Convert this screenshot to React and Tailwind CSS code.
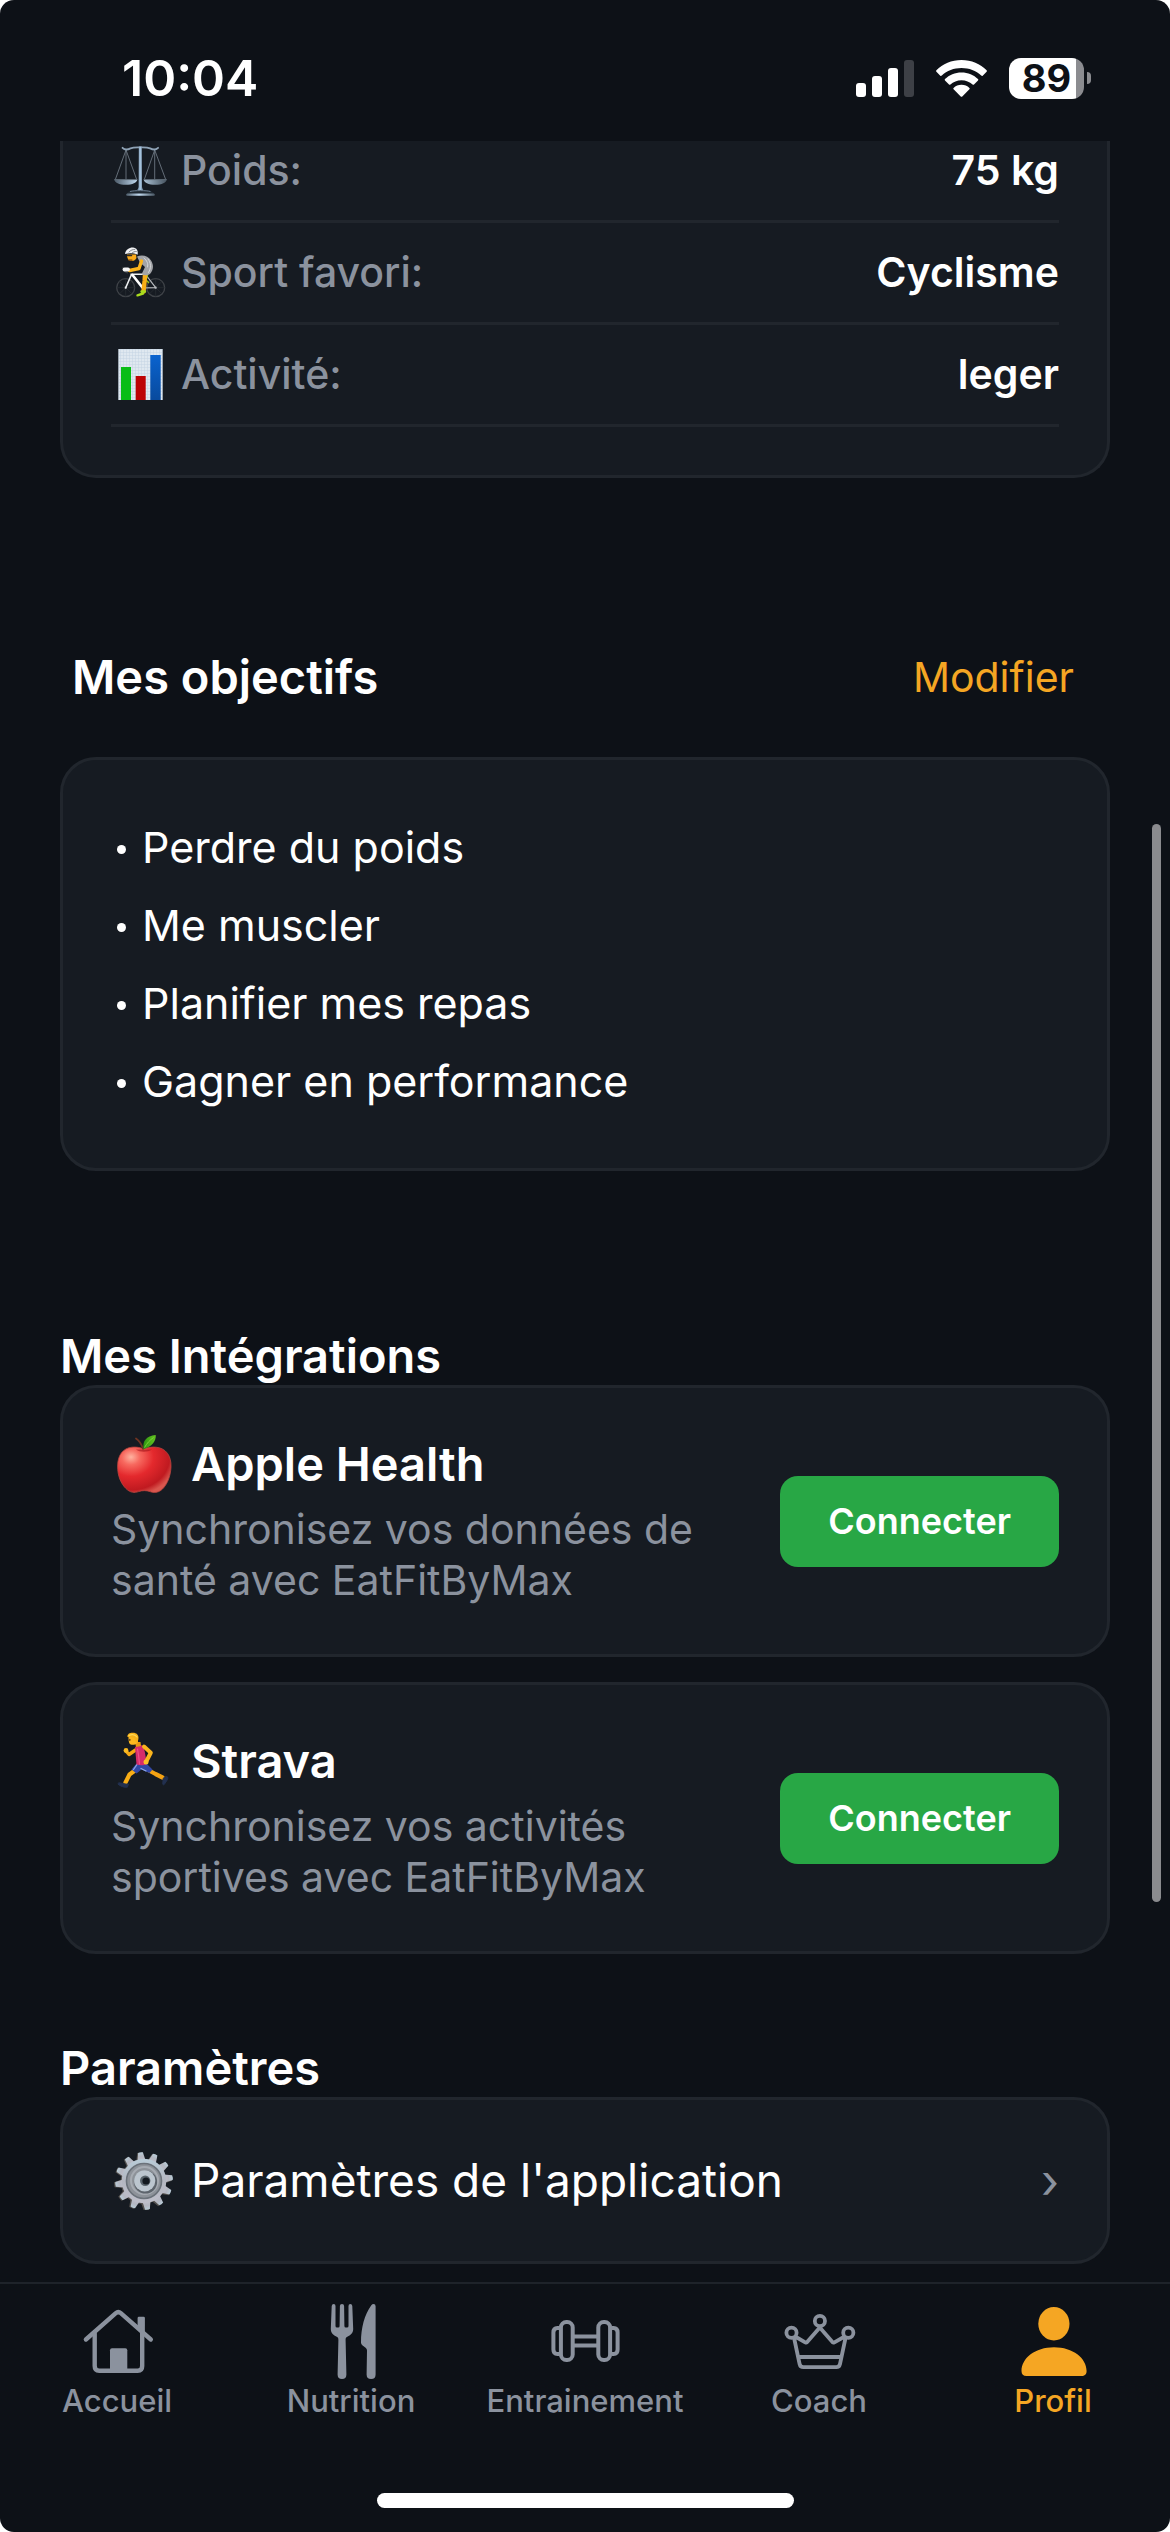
import React from "react";

/* ---------- Status bar glyphs ---------- */

function SignalIcon() {
  return (
    <svg width="58" height="37" viewBox="0 0 58 37" aria-hidden="true">
      <rect x="0" y="23" width="10" height="14" rx="3" fill="#fff" />
      <rect x="16" y="16" width="10" height="21" rx="3" fill="#fff" />
      <rect x="32" y="8" width="10" height="29" rx="3" fill="#fff" />
      <rect x="48" y="0" width="10" height="37" rx="3" fill="#3d4046" />
    </svg>
  );
}

function WifiIcon() {
  return (
    <svg width="51" height="37" viewBox="0 0 51 37" fill="#fff" aria-hidden="true">
      <path d="M25.500 0C35.400 0 44.400 3.900 50.600 10.200Q51.300 11 50.600 11.700L46.700 15.700Q46 16.300 45.200 15.600C40 10.700 33.100 8 25.500 8S11 10.700 5.800 15.600Q5 16.300 4.300 15.700L.4 11.700Q-.3 11 .4 10.200C6.600 3.900 15.600 0 25.500 0Z" />
      <path d="M25.500 12.500C32 12.500 37.800 15 42 19.100Q42.700 19.800 42 20.500L38 24.500Q37.300 25.100 36.600 24.500C33.700 21.900 29.800 20.300 25.500 20.300S17.300 21.900 14.400 24.500Q13.700 25.100 13 24.500L9 20.500Q8.300 19.800 9 19.100C13.200 15 19 12.500 25.500 12.500Z" />
      <path d="M25.500 24.800C28.600 24.800 31.400 26 33.400 28Q34 28.600 33.400 29.300L26.300 36.500Q25.500 37.200 24.700 36.500L17.600 29.300Q17 28.600 17.600 28C19.600 26 22.400 24.800 25.500 24.800Z" />
    </svg>
  );
}

function Battery() {
  return (
    <div className="flex items-center gap-[3px]">
      <div className="flex h-[41px] w-[75px] items-center justify-center rounded-xl bg-[linear-gradient(to_right,#fff_67px,#8b8c90_67px)] text-[38px] leading-[41px] font-bold text-[#0d1117]">
        89
      </div>
      <div className="h-3 w-1 rounded-r-full bg-[#8b8c90]" />
    </div>
  );
}

/* ---------- Pictograms ---------- */

function ScalesIcon() {
  return (
    <svg width="58" height="51" viewBox="0 0 58 51" fill="none" aria-hidden="true">
      <defs>
        <linearGradient id="pan" x1="0" x2="1">
          <stop offset="0" stopColor="#4b5a68" />
          <stop offset=".45" stopColor="#c3dcf2" />
          <stop offset="1" stopColor="#46535f" />
        </linearGradient>
        <linearGradient id="pole" x1="0" x2="1">
          <stop offset="0" stopColor="#3c5166" />
          <stop offset=".5" stopColor="#a9c7e2" />
          <stop offset="1" stopColor="#2f3e4c" />
        </linearGradient>
      </defs>
      <path d="M15 5 4.500 34M15 5v29M15 5l10.500 29M43.700 5 33.500 34M43.700 5v29M43.700 5 54.500 34" stroke="#6c7681" strokeWidth=".9" />
      <path d="M11.500 2.800c2 2 5.500 1.800 8 .6 3-1.300 6-1 9.800-1s6.800-.3 9.800 1c2.500 1.200 6 1.400 8-.6" stroke="#8ea2b5" strokeWidth="1.800" strokeLinecap="round" />
      <path d="M3.300 34.500h23c0 3-5 5.300-11.500 5.300S3.300 37.500 3.300 34.500ZM32.700 34.500h23c0 3-5 5.300-11.500 5.300s-11.500-2.300-11.500-5.300Z" fill="url(#pan)" />
      <path d="M3.300 34.600h23M32.700 34.600h23" stroke="#5e6a76" strokeWidth="1" />
      <path d="M27.800 1.500h3L31 42c.2 2 1.500 3.300 3.300 4.300h-10c1.800-1 3.100-2.300 3.300-4.300Z" fill="url(#pole)" />
      <path d="M18 46.300c3-1.600 19-1.600 22.600 0l3.400 3.200c0 1-1 1.200-2 1.200H17c-1 0-2-.2-2-1.200Z" fill="#1f2932" />
      <path d="M16 48.500h27l1 1.200c0 .8-1 1-2 1H17c-1 0-2-.2-2-1Z" fill="url(#pan)" />
      <path d="M19 46.500c5-1.200 16-1.200 20.500 0" stroke="#73869a" strokeWidth=".9" />
    </svg>
  );
}

function CyclistIcon() {
  return (
    <svg width="58" height="51" viewBox="0 0 58 51" fill="none" strokeLinecap="round" strokeLinejoin="round" aria-hidden="true">
      {[14.7, 44.700].map((cx) => (
        <g key={cx}>
          <circle cx={cx} cy="40.700" r="9" stroke="#3f4348" strokeWidth="1.300" />
          <path
            d={`M${cx - 9} 40.700h18M${cx} 31.700v18M${cx - 6.3} 34.400l12.600 12.600M${cx + 6.3} 34.400l-12.600 12.600`}
            stroke="#2d3237"
            strokeWidth=".6"
          />
          <circle cx={cx} cy="40.700" r="1.200" fill="#8d9197" />
        </g>
      ))}
      <path d="M35 28 44.700 40.700 31 41" stroke="#b9bcc0" strokeWidth="1.200" />
      <path d="m37 26-2 7 2.500 2.500" stroke="#9bc41c" strokeWidth="1.500" />
      <path d="M20.500 27.500 14.700 40.700M20 27.200h15" stroke="#eef0f2" strokeWidth="1.600" />
      <path d="m21.500 28 9.500 12" stroke="#fff" strokeWidth="2.600" />
      <path d="M12 20.500c0 3 1.500 4.500 4.500 5.300" stroke="#3b3f44" strokeWidth="1.300" />
      <path d="M34 27.500 33.600 34l-1.100 10.500" stroke="#f8ae18" strokeWidth="4.400" />
      <path d="M32 46.500 26.500 48.300M30.500 44.500h3.500" stroke="#a9dc1e" strokeWidth="2.400" />
      <path d="M26 9.500c5-2 11-1 14 4 2.600 4 3 9-1 13.500-3 2-7 1.300-8.300 0L34 20l-5-4.500Z" fill="#a2a4a8" />
      <path d="M37 12c3 3.500 3.500 9 .5 13.500M33 11c3 2.500 4.500 6 3.500 9" stroke="#d5d7d9" strokeWidth="1" />
      <path d="m30.500 14-2.500 7.500-9.500 2" stroke="#fbb41c" strokeWidth="3.400" />
      <path d="M13.500 22.500h3.500" stroke="#f4f4f4" strokeWidth="3.800" />
      <path d="M16 7.500h9l.5 3.500c-1 2.500-3.500 3-5.500 3s-4-2-4-6.500Z" fill="#f9a91a" />
      <path d="M16.500 8.500h4" stroke="#2b2b2b" strokeWidth="1.500" />
      <path d="M18 13.200h3" stroke="#70400e" strokeWidth="1.200" />
      <path d="M14 7C14.500 2.500 18.500.3 22 .5c3.500.3 5.500 3 4.600 7.300-4-1.800-8-1.800-12.600-.8Z" fill="#f1f2f4" />
      <path d="M18 5c1.800-1.900 3.800-2.600 5.800-2.600M21 6c1.300-1.200 2.600-1.600 4.300-1.500" stroke="#6b6f74" strokeWidth=".8" />
    </svg>
  );
}

function ChartIcon() {
  return (
    <svg width="58" height="51" viewBox="0 0 58 51" aria-hidden="true">
      <defs>
        <pattern id="paper" width="3" height="3" patternUnits="userSpaceOnUse">
          <rect width="3" height="3" fill="#dfe8f0" />
          <path d="M0 0h3M0 0v3" stroke="#c3d3e2" strokeWidth=".9" />
        </pattern>
        <linearGradient id="blueBar" x2="0" y2="1">
          <stop offset="0" stopColor="#0a63cf" />
          <stop offset="1" stopColor="#084a9d" />
        </linearGradient>
      </defs>
      <rect x="7" width="45" height="51" fill="url(#paper)" />
      <path d="M7.500 0v51M51.500 0v51" stroke="#9aa5b0" />
      <rect x="10" y="18" width="10" height="33" fill="#08bd16" />
      <rect x="24.700" y="27" width="10" height="24" fill="#bd0204" />
      <rect x="39.300" y="6" width="10.400" height="45" fill="url(#blueBar)" />
    </svg>
  );
}

function AppleIcon() {
  return (
    <svg width="66" height="58" viewBox="0 0 66 58" fill="none" aria-hidden="true">
      <defs>
        <radialGradient id="skin" cx=".25" cy=".22" r=".85">
          <stop offset="0" stopColor="#ffb3a0" />
          <stop offset=".2" stopColor="#f7695f" />
          <stop offset=".5" stopColor="#e4292d" />
          <stop offset=".85" stopColor="#c01a20" />
          <stop offset="1" stopColor="#d9564e" />
        </radialGradient>
        <linearGradient id="leaf" x1="0" x2="1">
          <stop offset="0" stopColor="#2f9410" />
          <stop offset="1" stopColor="#63c321" />
        </linearGradient>
      </defs>
      <path
        d="M33 14c4-1.600 8-2.200 12-1.800C55 13 60.500 21 60 32c-.5 10-4 17.500-8.500 22-4.500 4.300-9 4-12.500 2.600-3.600-1.300-7.600-1.300-11.400 0-4 1.400-8.300 1.300-12.600-3C10 48.600 6.500 41 6.600 31 6.700 20 12 13 21 12.200c4-.4 8 .2 12 1.800Z"
        fill="url(#skin)"
        stroke="#b8443d"
        strokeWidth=".8"
      />
      <path d="M25 14.500c4 3 11.500 3 16 0-5 .2-11 .2-16 0Z" fill="#a3161b" opacity=".6" />
      <path d="M25 3.500c3 2 5.500 5.500 7 10.300" stroke="#6f3322" strokeWidth="1.800" strokeLinecap="round" />
      <path d="M32.500 14C31.500 6 35 1 44.700 0c.6 6-4 12-12.200 14Z" fill="url(#leaf)" />
      <path d="M33.500 12.500C36 8 39 5 42.500 2.500" stroke="#8bdb45" strokeWidth=".8" />
    </svg>
  );
}

function RunnerIcon() {
  return (
    <svg width="66" height="58" viewBox="0 0 66 58" fill="none" strokeLinecap="round" strokeLinejoin="round" aria-hidden="true">
      <path d="m26 37-7.500 5.500-4 8" stroke="#f9ae16" strokeWidth="4.200" />
      <path d="M8 50.800c3 .3 6 1.500 9.500 1.400l-1.200 3c-3 .4-7-1-9-2.800Z" fill="#22304f" stroke="#22304f" />
      <path d="m38 38.500 6.500 3.500 7 3.500" stroke="#f5a313" strokeWidth="4.200" />
      <path d="M55.500 44.500c1.500.3 1.800 1 1 3l-3.300 5c-1 .8-1.600 0-1.400-1.500l.4-4.500Z" fill="#22304f" stroke="#22304f" />
      <path d="M25.500 31.500 36 32l5.500 5.500-3 3.500-8-3.500-5 4-5-4Z" fill="#3148a6" />
      <path d="m26 32.500-3.500 5M30 36.500l5 2.500" stroke="#8ea6e6" strokeWidth="1.300" />
      <path d="m24.500 18-6.500 4.500-3-3.500" stroke="#f6a813" strokeWidth="3.400" />
      <circle cx="15" cy="18.500" r="2.400" fill="#fbbb22" />
      <path d="M24 15c3-1.700 6.500-2.200 8.500-1.200l1.300 6.200 2.200 12c-3 1.600-7.500 1.600-10.500.5Z" fill="#d62c6a" />
      <path d="M26.500 17c1 5 1.500 9 2 15" stroke="#ee4f8a" strokeWidth="1.200" />
      <path d="m33 14.500 6.800 6.300L35.500 29" stroke="#fbb51d" strokeWidth="4" />
      <circle cx="35" cy="30" r="2.500" fill="#fcc02a" />
      <path d="M24 10h5.500l.5 4-5 1Z" fill="#e99510" />
      <path d="M17.500 5h9l.5 5c-1.500 2.500-4 3-6.500 2.800-2-.3-3-2-3-7.800Z" fill="#fcb81f" />
      <path d="M16.500 5c-.5-3 2-4.200 5-4.300 4-.2 6 2 6 5 0 2.800-1 4-2.500 5l-1-3.500c-1-2-4-2.500-7.500-2.200Z" fill="#f6b21a" />
      <path d="M18 3.500c3-1.500 6-1 8 1.500" stroke="#ffda57" strokeWidth="1.200" />
      <path d="M18.800 7.200v1.200" stroke="#54310b" strokeWidth="1.100" />
    </svg>
  );
}

function GearIcon() {
  const teeth = Array.from({ length: 12 }, (_, i) => i * 30 - 7);
  return (
    <svg width="66" height="58" viewBox="0 0 66 58" fill="none" aria-hidden="true">
      <defs>
        <linearGradient id="steel" x2="0" y2="1">
          <stop offset="0" stopColor="#b9ccd8" />
          <stop offset=".5" stopColor="#b4b7c1" />
          <stop offset="1" stopColor="#bfbfca" />
        </linearGradient>
      </defs>
      <g fill="#55524f">
        {teeth.map((a) => (
          <path key={a} d="M28 8 29.700.6h5L36.500 8Z" transform={`rotate(${a} 32 29.500)`} />
        ))}
        <circle cx="32" cy="29.500" r="22.500" />
      </g>
      <g fill="url(#steel)">
        {teeth.map((a) => (
          <path key={a} d="M29 8.500 30.600.4q2.400-.8 4.800 0L37 8.500Z" transform={`rotate(${a} 33 29)`} />
        ))}
        <circle cx="33" cy="29" r="22.300" />
      </g>
      <circle cx="33" cy="29" r="17.700" fill="#8d9299" />
      <circle cx="33" cy="29" r="17.500" stroke="#6b727a" strokeWidth="1.600" />
      <circle cx="33.500" cy="28.600" r="13.500" stroke="#a6abb2" strokeWidth="2" />
      <circle cx="34.500" cy="30" r="11.600" fill="#5d646c" />
      <circle cx="33.700" cy="28.800" r="10.600" fill="#bcc6cf" />
      <circle cx="34.200" cy="28.800" r="5.200" fill="#59646c" />
      <circle cx="35" cy="29" r="3.600" fill="#131920" />
    </svg>
  );
}

/* ---------- Tab bar icons ---------- */

function HomeIcon() {
  return (
    <svg width="75" height="75" viewBox="0 0 75 75" fill="none" stroke="currentColor" strokeWidth="4.400" strokeLinecap="round" strokeLinejoin="round" aria-hidden="true">
      <path d="M5.900 35.500 35.800 9.200Q38.300 7 40.800 9.200L70.800 35.500" />
      <path d="M14.700 29.500V62q0 4.700 4.500 4.700h38.500q4.500 0 4.500-4.700V29.500" />
      <path d="M57.600 22V14q0-1.300 1.300-1.300h4.700q1.300 0 1.300 1.300v16Z" fill="currentColor" stroke="none" />
      <path d="M30 66V46.300q0-2 2-2h13.300q2 0 2 2V66Z" fill="currentColor" stroke="none" />
    </svg>
  );
}

function CutleryIcon() {
  return (
    <svg width="75" height="75" viewBox="0 0 75 75" fill="currentColor" aria-hidden="true">
      <path d="M19.700 0q1.800 0 1.800 2v20q0 1.500 1.500 1.500h1.200q1.400 0 1.400-1.500l.3-20q0-2 2.100-2t2.100 2l.3 20q0 1.500 1.400 1.500h1.200q1.500 0 1.500-1.500V2q0-2 1.800-2t2 2L39.200 25c0 4.500-3.200 6.500-5.400 7.400-1.600.7-2.300 1.600-2.200 3.600l.8 34.500q0 4.500-4.400 4.500t-4.400-4.500L24.400 36c.1-2-.6-2.900-2.200-3.600C20 31.500 16.800 29.500 16.800 25L17.700 2q.2-2 2-2Z" />
      <path d="M59.500 0q2.100 0 2.100 2.200v68.300q0 4.500-4.500 4.500t-4.500-4.500L53 46.500q0-1.800-1.400-2.800l-3.300-2.400Q47 40.300 47 38.500C47 24 50.500 10.500 57.300 1.300Q58.300 0 59.500 0Z" />
    </svg>
  );
}

function DumbbellIcon() {
  return (
    <svg width="75" height="75" viewBox="0 0 75 75" fill="none" stroke="currentColor" strokeWidth="4" strokeLinejoin="round" aria-hidden="true">
      <path d="M11.500 24H9.400Q5.400 24 5.400 28.500v17Q5.400 50 9.400 50h2.100M63.500 24h2.100q4 0 4 4.500v17q0 4.500-4 4.500h-2.100" />
      <rect x="12.900" y="18" width="11.800" height="38" rx="5.500" />
      <rect x="50.300" y="18" width="11.800" height="38" rx="5.500" />
      <path d="M25 32.600h25M25 41.400h25" />
    </svg>
  );
}

function CrownIcon() {
  return (
    <svg width="75" height="75" viewBox="0 0 75 75" fill="none" stroke="currentColor" strokeWidth="3.800" strokeLinecap="round" strokeLinejoin="round" aria-hidden="true">
      <circle cx="37.900" cy="17" r="5.100" />
      <circle cx="9.500" cy="28.700" r="5.100" />
      <circle cx="66.300" cy="28.700" r="5.100" />
      <path d="m12.300 35 5.300 25q.7 3.100 3.700 3.100h33q3 0 3.700-3.100l5.300-25M14 33l9.200 5.300q1.500.8 2.400-.7L37.800 23.500 50 37.600q.9 1.500 2.400.7L61.800 33M17.500 53h41" />
    </svg>
  );
}

function PersonIcon() {
  return (
    <svg width="75" height="75" viewBox="0 0 75 75" fill="currentColor" aria-hidden="true">
      <ellipse cx="37.900" cy="19.700" rx="15.600" ry="16.700" />
      <path d="M38 43.300c19 0 32.600 11 32.600 23.700 0 3.500-1.800 5-5.200 5H10.600c-3.400 0-5.100-1.500-5.100-5C5.500 54.300 19 43.300 38 43.300Z" />
    </svg>
  );
}

/* ---------- Building blocks ---------- */

const infoRows = [
  { icon: ScalesIcon, label: "Poids:", value: "75 kg" },
  { icon: CyclistIcon, label: "Sport favori:", value: "Cyclisme" },
  { icon: ChartIcon, label: "Activité:", value: "leger" },
];

const goals = ["Perdre du poids", "Me muscler", "Planifier mes repas", "Gagner en performance"];

const integrations = [
  { icon: AppleIcon, name: "Apple Health", text: "Synchronisez vos données de santé avec EatFitByMax" },
  { icon: RunnerIcon, name: "Strava", text: "Synchronisez vos activités sportives avec EatFitByMax" },
];

const tabs = [
  { icon: HomeIcon, label: "Accueil" },
  { icon: CutleryIcon, label: "Nutrition" },
  { icon: DumbbellIcon, label: "Entrainement" },
  { icon: CrownIcon, label: "Coach" },
  { icon: PersonIcon, label: "Profil", active: true },
];

function StatusBar() {
  return (
    <header className="flex h-[141px] items-start justify-between pt-12 pr-[79px] pl-[122px]">
      <time className="text-[50px] leading-[60px] font-semibold">10:04</time>
      <div className="flex h-[60px] items-center gap-[22px]">
        <SignalIcon />
        <WifiIcon />
        <Battery />
      </div>
    </header>
  );
}

function SectionTitle({ children }) {
  return <h2 className="text-[47px] leading-[58px] font-semibold">{children}</h2>;
}

function InfoCard() {
  return (
    <dl className="rounded-b-[36px] border-3 border-t-0 border-[#21262d] bg-[#161b22] px-12 pb-12 text-[41px] leading-[51px]">
      {infoRows.map(({ icon: Icon, label, value }) => (
        <div key={label} className="flex items-center justify-between border-b-3 border-[#21262d] py-6 first:pt-1">
          <dt className="flex items-center gap-3 font-medium text-[#8b929e]">
            <Icon />
            {label}
          </dt>
          <dd className="font-semibold">{value}</dd>
        </div>
      ))}
    </dl>
  );
}

function IntegrationCard({ icon: Icon, name, text }) {
  return (
    <article className="flex items-center justify-between gap-6 rounded-[36px] border-3 border-[#21262d] bg-[#161b22] p-12">
      <div className="flex max-w-[600px] flex-col gap-3">
        <h3 className="flex h-14 items-center gap-[14px] text-[47px] leading-[56px] font-semibold">
          <Icon />
          {name}
        </h3>
        <p className="text-[41px] leading-[51px] text-[#8b929e]">{text}</p>
      </div>
      <button
        type="button"
        aria-label={`Connecter ${name}`}
        className="shrink-0 rounded-[18px] bg-[#28a745] px-12 py-[22px] text-[36px] leading-[47px] font-semibold"
      >
        Connecter
      </button>
    </article>
  );
}

export default function App() {
  return (
    <div className="bg-white">
      <div className="relative flex min-h-screen flex-col overflow-hidden rounded-[14px] bg-[#0d1117] font-['Inter',sans-serif] text-white">
        <StatusBar />

        <main className="flex-1 px-[60px]">
          <InfoCard />

          <section className="mt-[170px]">
            <div className="flex items-center justify-between px-3">
              <SectionTitle>Mes objectifs</SectionTitle>
              <button type="button" className="px-6 text-[41px] leading-[51px] text-[#f5a623]">
                Modifier
              </button>
            </div>
            <ul className="mt-[51px] rounded-[36px] border-3 border-[#21262d] bg-[#161b22] p-12 text-[43px] leading-[54px]">
              {goals.map((goal) => (
                <li key={goal} className="flex items-center gap-4 py-3 pl-[6px]">
                  <span className="mt-1 size-[9px] rounded-full bg-white" />
                  {goal}
                </li>
              ))}
            </ul>
          </section>

          <section className="mt-[156px]">
            <SectionTitle>Mes Intégrations</SectionTitle>
            <div className="flex flex-col gap-[25px]">
              {integrations.map((item) => (
                <IntegrationCard key={item.name} {...item} />
              ))}
            </div>
          </section>

          <section className="mt-[85px]">
            <SectionTitle>Paramètres</SectionTitle>
            <button
              type="button"
              className="flex w-full items-center justify-between rounded-[36px] border-3 border-[#21262d] bg-[#161b22] p-12 text-[46px] leading-[65px]"
            >
              <span className="flex items-center gap-[14px]">
                <GearIcon />
                Paramètres de l'application
              </span>
              <span className="text-[47px] text-[#8b929e]">›</span>
            </button>
          </section>
        </main>

        <footer className="mt-[18px] border-t-2 border-[#1e232a] pt-5 pb-6">
          <nav className="grid grid-cols-5 text-[31px] leading-[36px] font-medium">
            {tabs.map(({ icon: Icon, label, active }) => (
              <a
                key={label}
                href={`#${label.toLowerCase()}`}
                aria-current={active ? "page" : undefined}
                className={`flex flex-col items-center gap-1 ${active ? "text-[#f5a623]" : "text-[#8b929e]"}`}
              >
                <Icon />
                {label}
              </a>
            ))}
          </nav>
          <div className="mx-auto mt-[74px] h-[15px] w-[417px] rounded-full bg-white" />
        </footer>

        <div className="absolute top-[824px] right-[9px] h-[1078px] w-[9px] rounded-full bg-[#8a8b8e]" aria-hidden="true" />
      </div>
    </div>
  );
}
